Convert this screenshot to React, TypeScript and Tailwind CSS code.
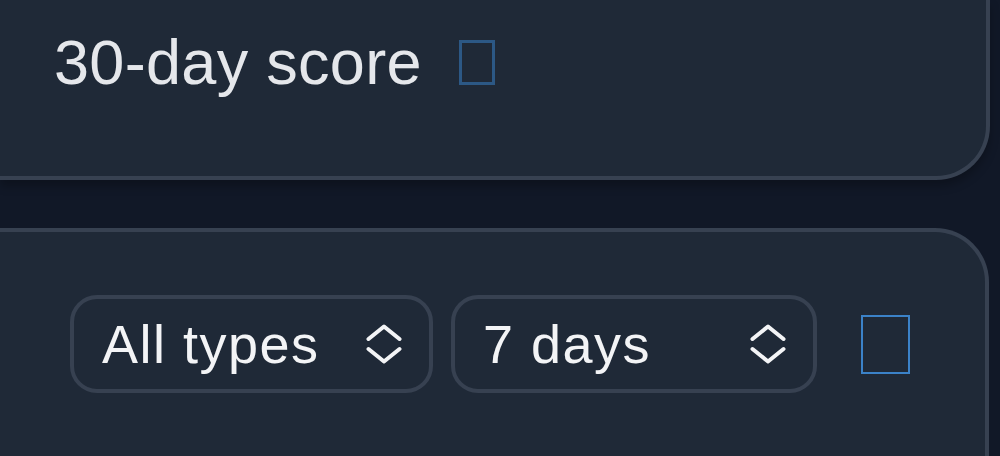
import React from "react";

const font = { fontFamily: '"Liberation Sans", Arial, sans-serif' };

const Chevrons = () => (
  <svg width="36" height="40" viewBox="0 0 36 40" fill="none" className="shrink-0">
    <path d="M2.5 15 L18 2.5 L33.5 15" stroke="#f3f4f6" strokeWidth="4" strokeLinecap="round" strokeLinejoin="round" />
    <path d="M2.5 25 L18 37.5 L33.5 25" stroke="#f3f4f6" strokeWidth="4" strokeLinecap="round" strokeLinejoin="round" />
  </svg>
);

const Select = ({ label, width }: { label: string; width: string }) => (
  <div
    className={`flex h-[98px] ${width} items-center justify-between rounded-[27px] border-4 border-[#374151] bg-[#1f2937] pl-[28px] pr-[27px]`}
  >
    <span className="text-[54px] leading-none tracking-[1.5px] text-[#f3f4f6]">{label}</span>
    <Chevrons />
  </div>
);

export default function App() {
  return (
    <div className="flex h-[456px] w-[1000px] flex-col overflow-hidden bg-[#111827]" style={font}>
      {/* score card, cut off at top and left */}
      <div className="mr-[10px] h-[180px] shrink-0 rounded-br-[54px] border-r-4 border-b-4 border-[#374151] bg-[#1f2937] pl-[54px] pt-[26px] shadow-[0_6px_10px_rgba(0,0,0,0.25)]">
        <div className="flex items-center">
          <span className="text-[63px] leading-[72px] tracking-[0.3px] text-[#e5e7eb]">30-day score</span>
          <span className="ml-[37px] h-[45px] w-[36px] border-[3px] border-[#2c5885]" />
        </div>
      </div>

      {/* filters card */}
      <div className="mr-[11px] mt-[48px] flex-1 rounded-tr-[54px] border-t-4 border-r-4 border-[#374151] bg-[#1f2937] pl-[70px] pt-[63px]">
        <div className="flex items-center">
          <Select label="All types" width="w-[363px]" />
          <div className="w-[18px]" />
          <Select label="7 days" width="w-[366px]" />
          <span className="ml-[44px] h-[59px] w-[49px] border-2 border-[#3b82c8]" />
        </div>
      </div>
    </div>
  );
}
